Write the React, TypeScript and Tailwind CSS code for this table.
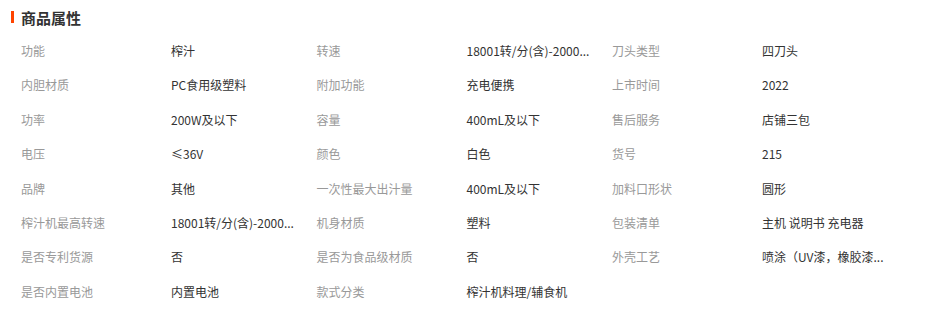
import React from "react";

const rows: [string, string][][] = [
  [["功能", "榨汁"], ["转速", "18001转/分(含)-2000..."], ["刀头类型", "四刀头"]],
  [["内胆材质", "PC食用级塑料"], ["附加功能", "充电便携"], ["上市时间", "2022"]],
  [["功率", "200W及以下"], ["容量", "400mL及以下"], ["售后服务", "店铺三包"]],
  [["电压", "≤36V"], ["颜色", "白色"], ["货号", "215"]],
  [["品牌", "其他"], ["一次性最大出汁量", "400mL及以下"], ["加料口形状", "圆形"]],
  [["榨汁机最高转速", "18001转/分(含)-2000..."], ["机身材质", "塑料"], ["包装清单", "主机 说明书 充电器"]],
  [["是否专利货源", "否"], ["是否为食品级材质", "否"], ["外壳工艺", "喷涂（UV漆，橡胶漆..."]],
  [["是否内置电池", "内置电池"], ["款式分类", "榨汁机料理/辅食机"]],
];

export default function App() {
  return (
    <div
      className="w-[926px] h-[319px] bg-white overflow-hidden"
      style={{ fontFamily: '"Microsoft YaHei", "Noto Sans CJK SC", sans-serif' }}
    >
      <div className="h-[34px] flex items-center pl-[11px]">
        <span className="w-[3px] h-[12px] bg-[#ff4400] mr-[7px]" />
        <span className="text-[15px] font-bold text-[#333] leading-none">商品属性</span>
      </div>
      <div className="pl-[21px]">
        {rows.map((row, i) => (
          <div key={i} className="flex">
            {row.map(([k, v], j) => (
              <div key={j} className="flex w-[295.5px] shrink-0 py-[10px] text-[12px] leading-[14.4px]">
                <div className="w-[150px] shrink-0 text-[#999] whitespace-nowrap">{k}</div>
                <div className="w-[140px] text-[#333] whitespace-nowrap">{v}</div>
              </div>
            ))}
          </div>
        ))}
      </div>
    </div>
  );
}
